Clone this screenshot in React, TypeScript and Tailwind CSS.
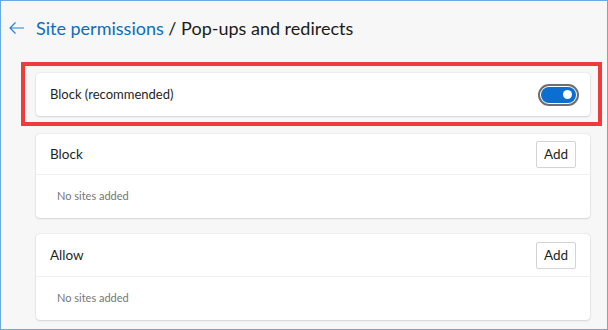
import React from "react";

const font = { fontFamily: 'Lato, "Noto Sans", Arial, sans-serif' };

const BackArrow = () => (
  <svg width="15" height="12" viewBox="0 0 15 12" fill="none">
    <path d="M1 6H15M6.5 0.5L1 6L6.5 11.5" stroke="#2b7fd6" strokeWidth="1.2" />
  </svg>
);

const Toggle = () => (
  <div className="w-[41px] h-[22px] rounded-full border-2 border-[#6e6e6e] p-[1px] bg-white">
    <div className="w-full h-full rounded-full bg-[#0a6fd0] flex items-center justify-end pr-[4px]">
      <div className="w-[9px] h-[9px] rounded-full bg-white" />
    </div>
  </div>
);

const SiteList = ({ title, className, headerClass }: any) => (
  <div
    className={`${className} ml-[35px] mr-[17px] bg-white rounded-[4px] shadow-[0_0_2px_rgba(0,0,0,0.14),0_1px_2px_rgba(0,0,0,0.1)]`}
  >
    <div className={`${headerClass} flex items-center justify-between pl-[14px] pr-[14px]`}>
      <div className="text-[13.5px] text-[#1f1f1f]">{title}</div>
      <button className="w-[40px] h-[27px] border border-[#d4d4d4] rounded-[2px] bg-white text-[13.5px] text-[#1f1f1f]">
        Add
      </button>
    </div>
    <div className="h-[44px] border-t border-[#f0f0f0] flex items-center pl-[21px] text-[11px] text-[#767676]">
      No sites added
    </div>
  </div>
);

export default function App() {
  return (
    <div
      className="w-[608px] h-[330px] border border-[#69a9e8] bg-[#f7f7f7] flex flex-col overflow-hidden"
      style={font}
    >
      <div className="mt-[15px] h-[24px] flex items-center pl-[8px]">
        <BackArrow />
        <div className="ml-[12px] text-[18px] text-[#1b1b1b] leading-none">
          <span className="text-[#0f6cbd]">Site permissions</span> / Pop-ups and redirects
        </div>
      </div>

      <div className="mt-[22px] ml-[20px] mr-[5px] border-4 border-[#ef3b3b] pt-[7px] pb-[6px] pl-[11px] pr-[8px]">
        <div className="h-[43px] bg-white rounded-[4px] shadow-[0_0_2px_rgba(0,0,0,0.14),0_1px_2px_rgba(0,0,0,0.1)] flex items-center justify-between pl-[14px] pr-[11px]">
          <div className="text-[13px] text-[#1f1f1f]">Block (recommended)</div>
          <Toggle />
        </div>
      </div>

      <SiteList title="Block" className="mt-[8px]" headerClass="h-[40px]" />
      <SiteList title="Allow" className="mt-[16px]" headerClass="h-[42px]" />
    </div>
  );
}
